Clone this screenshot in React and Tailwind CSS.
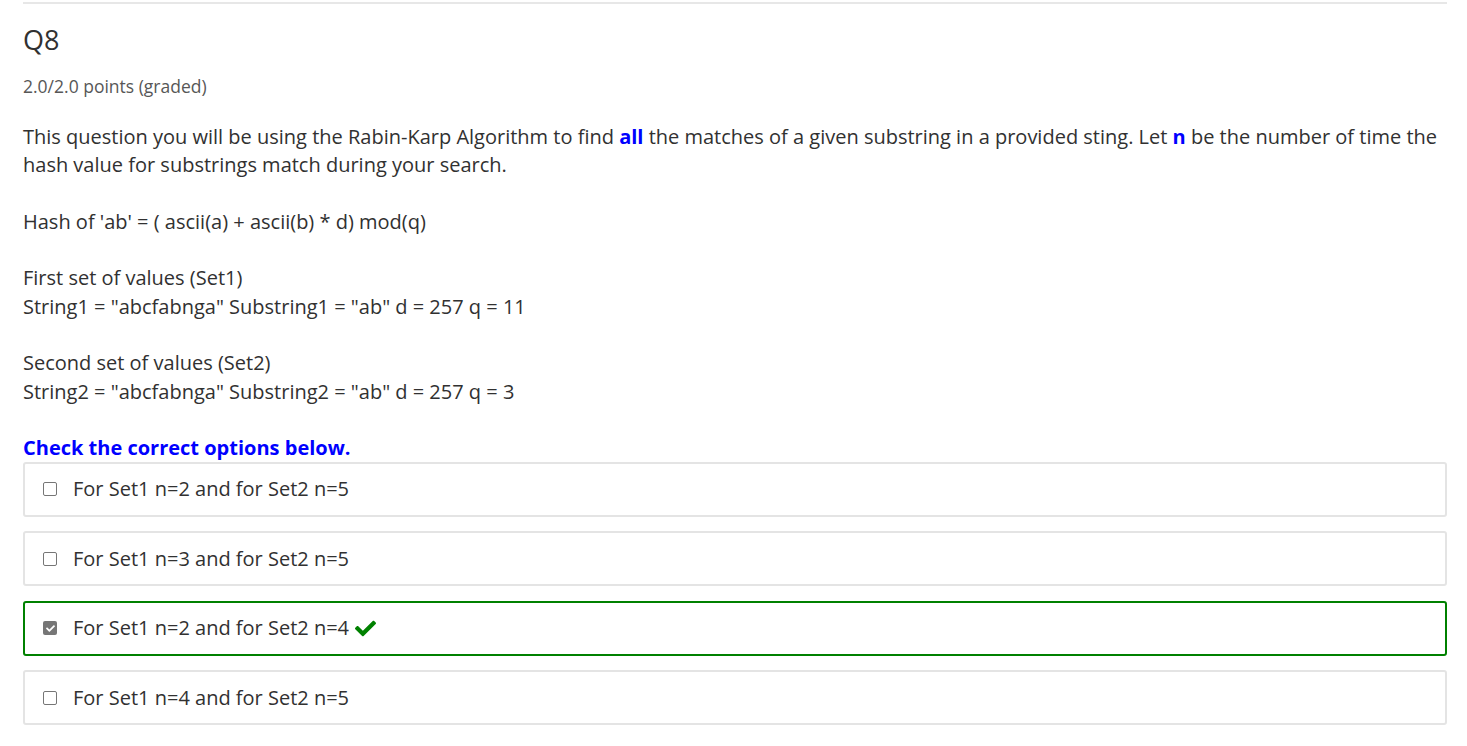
import { FaCheck } from 'react-icons/fa'

const options = [
  { label: 'For Set1 n=2 and for Set2 n=5', checked: false },
  { label: 'For Set1 n=3 and for Set2 n=5', checked: false },
  { label: 'For Set1 n=2 and for Set2 n=4', checked: true, correct: true },
  { label: 'For Set1 n=4 and for Set2 n=5', checked: false },
]

function Box({ checked }) {
  if (checked) {
    return (
      <span className="w-[14px] h-[14px] rounded-[2px] bg-[#767676] flex items-center justify-center flex-shrink-0">
        <FaCheck className="text-white" size={9} />
      </span>
    )
  }
  return <span className="w-[14px] h-[14px] rounded-[2px] border border-[#767676] bg-white flex-shrink-0" />
}

export default function App() {
  return (
    <div className="bg-white min-h-screen pl-[23px] pr-[20px] pt-[2px] text-[#313131]" style={{ fontFamily: '"Open Sans", sans-serif' }}>
      <div className="border-t-2 border-[#e7e7e7]" />
      <h2 className="text-[27px] leading-[32px] mt-[20px] text-[#313131]">Q8</h2>
      <div className="text-[17.5px] leading-[20px] mt-[20px] text-[#575757]">2.0/2.0 points (graded)</div>

      <div className="text-[20px] leading-[28.3px] mt-[27px]">
        <p>
          This question you will be using the Rabin-Karp Algorithm to find <b className="text-[#0000ff]">all</b> the matches of a given substring in a provided sting. Let <b className="text-[#0000ff]">n</b> be the number of time the hash value for substrings match during your search.
        </p>
        <p className="mt-[28.3px]">Hash of 'ab' = ( ascii(a) + ascii(b) * d) mod(q)</p>
        <p className="mt-[28.3px]">First set of values (Set1)</p>
        <p>String1 = "abcfabnga" Substring1 = "ab" d = 257 q = 11</p>
        <p className="mt-[28.3px]">Second set of values (Set2)</p>
        <p>String2 = "abcfabnga" Substring2 = "ab" d = 257 q = 3</p>
        <p className="mt-[28.3px] font-bold text-[#0000ff]">Check the correct options below.</p>
      </div>

      <div className="flex flex-col gap-[14.6px] mt-[-1px]">
        {options.map((o) => (
          <div
            key={o.label}
            className={`h-[55px] rounded-[3px] border-2 flex items-center pl-[18px] gap-[16px] text-[20px] ${
              o.correct ? 'border-[#008100]' : 'border-[#e4e4e4]'
            }`}
          >
            <Box checked={o.checked} />
            <span className="flex items-center gap-[6px]">
              {o.label}
              {o.correct && <FaCheck className="text-[#008100]" size={21} />}
            </span>
          </div>
        ))}
      </div>
    </div>
  )
}
